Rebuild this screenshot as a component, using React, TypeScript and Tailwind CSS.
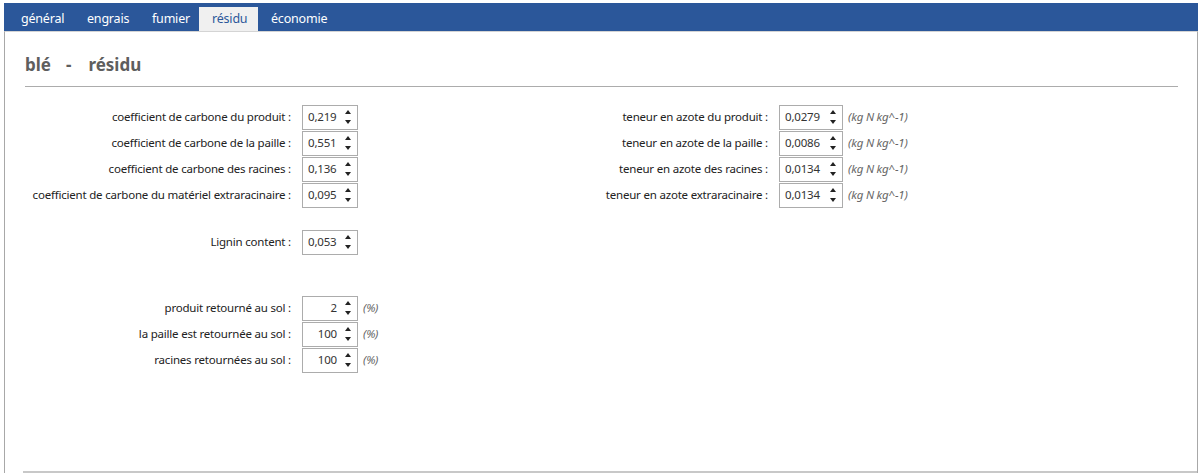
import React from "react";

const font = { fontFamily: '"Segoe UI", "Noto Sans", "Open Sans", sans-serif' };

const Spinner = ({ value, right, w }: { value: string; right?: boolean; w: string }) => (
  <div className={w + " flex h-[25px] items-center border border-[#acacac] bg-white"}>
    <span
      className={
        "flex-1 text-[11.5px] tracking-[-0.2px] text-[#333] " + (right ? "pr-[6px] text-right" : "pl-[5px]")
      }
    >
      {value}
    </span>
    <div className="flex w-[14px] flex-col items-center gap-[6px] pr-[5px]">
      <svg width="6" height="4" viewBox="0 0 6 4">
        <path d="M3 0 L6 4 L0 4 Z" fill="#222" />
      </svg>
      <svg width="6" height="4" viewBox="0 0 6 4">
        <path d="M0 0 L6 0 L3 4 Z" fill="#222" />
      </svg>
    </div>
  </div>
);

const Row = ({
  label,
  value,
  unit,
  right,
  labelW,
  boxW = "w-[56px]",
}: {
  label: string;
  value: string;
  unit?: string;
  right?: boolean;
  labelW: string;
  boxW?: string;
}) => (
  <div className="flex h-[26px] items-center">
    <span className={labelW + " pr-[11px] text-right text-[11.5px] tracking-[-0.2px] text-[#222]"}>{label}</span>
    <Spinner value={value} right={right} w={boxW} />
    {unit && <span className="ml-[5px] text-[11.5px] italic tracking-[-0.2px] text-[#666]">{unit}</span>}
  </div>
);

const tabs = [
  { t: "général", w: "w-[66px]" },
  { t: "engrais", w: "w-[65px]" },
  { t: "fumier", w: "w-[60px]" },
  { t: "résidu", w: "w-[59px]" },
  { t: "économie", w: "w-[70px]" },
];

export default function App() {
  return (
    <div className="h-[473px] w-[1199px] bg-white pl-[4px] pr-[1px] pt-[3px]" style={font}>
      <div className="flex h-[28px] items-end bg-[#2b579a] pl-[4px]">
        {tabs.map(({ t, w }) => (
          <div
            key={t}
            className={
              w +
              " flex h-[24px] items-center pl-[13px] text-[12.5px] tracking-[-0.2px] " +
              (t === "résidu" ? "bg-[#f0f0f0] text-[#2b579a]" : "text-white")
            }
          >
            {t}
          </div>
        ))}
      </div>
      <div className="flex h-[442px] flex-col border-x border-[#a8a8a8] border-t border-t-[#d4d4d4]">
        <div className="ml-[20px] mr-[19px] flex h-[55px] items-end border-b border-[#acacac] pb-[9px]">
          <span className="text-[17px] font-bold text-[#5e5e5e]">blé</span>
          <span className="ml-[15px] text-[17px] font-bold text-[#5e5e5e]">-</span>
          <span className="ml-[17px] text-[17px] font-bold text-[#5e5e5e]">résidu</span>
        </div>
        <div className="mt-[17px] flex">
          <div className="w-[480px]">
            <Row label="coefficient de carbone du produit :" value="0,219" labelW="w-[297px]" />
            <Row label="coefficient de carbone de la paille :" value="0,551" labelW="w-[297px]" />
            <Row label="coefficient de carbone des racines :" value="0,136" labelW="w-[297px]" />
            <Row label="coefficient de carbone du matériel extraracinaire :" value="0,095" labelW="w-[297px]" />
            <div className="mt-[21px]">
              <Row label="Lignin content :" value="0,053" labelW="w-[297px]" />
            </div>
            <div className="mt-[40px]">
              <Row label="produit retourné au sol :" value="2" right unit="(%)" labelW="w-[297px]" />
              <Row label="la paille est retournée au sol :" value="100" right unit="(%)" labelW="w-[297px]" />
              <Row label="racines retournées au sol :" value="100" right unit="(%)" labelW="w-[297px]" />
            </div>
          </div>
          <div>
            <Row label="teneur en azote du produit :" value="0,0279" unit="(kg N kg^-1)" labelW="w-[294px]" boxW="w-[64px]" />
            <Row label="teneur en azote de la paille :" value="0,0086" unit="(kg N kg^-1)" labelW="w-[294px]" boxW="w-[64px]" />
            <Row label="teneur en azote des racines :" value="0,0134" unit="(kg N kg^-1)" labelW="w-[294px]" boxW="w-[64px]" />
            <Row label="teneur en azote extraracinaire :" value="0,0134" unit="(kg N kg^-1)" labelW="w-[294px]" boxW="w-[64px]" />
          </div>
        </div>
        <div className="flex-1" />
        <div className="ml-[18px] border-b-2 border-[#c8c8c8]" />
      </div>
    </div>
  );
}
